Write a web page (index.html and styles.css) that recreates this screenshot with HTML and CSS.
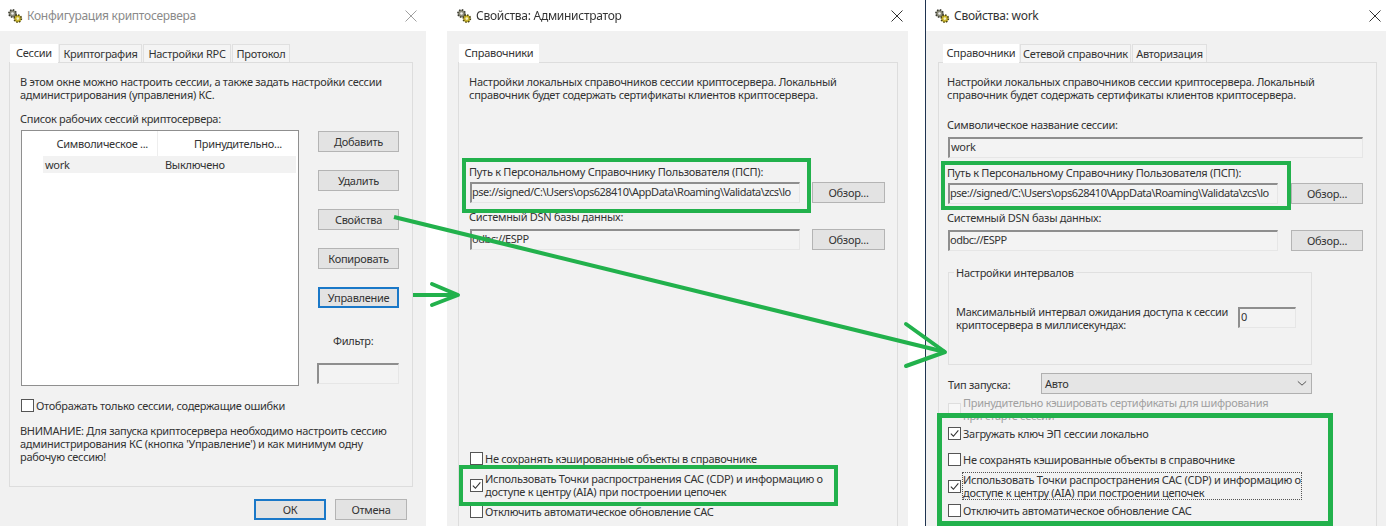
FILE: index.html
```html
<!DOCTYPE html>
<html lang="ru">
<head>
  <meta charset="UTF-8" />
  <title>Конфигурация криптосервера</title>
  <link rel="stylesheet" href="styles.css">
</head>
<body>
  <svg class="defs" width="0" height="0">
    <symbol id="gears" viewBox="0 0 16 16">
      <circle cx="5.5" cy="5.5" r="3.6" fill="#8c8c7a" stroke="#3a3a30" stroke-width="1.6" stroke-dasharray="1.5 1.3"/>
      <circle cx="5.5" cy="5.5" r="1.3" fill="#f0f0f0"/>
      <circle cx="10.8" cy="10.6" r="3.6" fill="#c8b42c" stroke="#4a4418" stroke-width="1.6" stroke-dasharray="1.5 1.3"/>
      <circle cx="10.8" cy="10.6" r="1.3" fill="#f4f0c8"/>
    </symbol>
    <symbol id="tick" viewBox="0 0 12 12">
      <path d="M2 6.2 L4.8 9 L10.2 2.6" fill="none" stroke="#333" stroke-width="1.2"/>
    </symbol>
    <symbol id="cross" viewBox="0 0 12 12">
      <path d="M0.5 0.5 L11.5 11.5 M11.5 0.5 L0.5 11.5" fill="none" stroke="currentColor" stroke-width="1"/>
    </symbol>
  </svg>

  <!-- Конфигурация -->
  <section class="window win-config">
    <header class="titlebar dim">
      <svg class="gear"><use href="#gears"/></svg>
      <span>Конфигурация криптосервера</span>
      <svg class="close light"><use href="#cross"/></svg>
    </header>
    <div class="client">
      <div class="tabs">
        <div class="tab active">Сессии</div>
        <div class="tab t-crypt">Криптография</div>
        <div class="tab t-rpc">Настройки RPC</div>
        <div class="tab t-proto">Протокол</div>
      </div>
      <div class="panel panel-config">
        <p class="txt">В этом окне можно настроить сессии, а также задать настройки сессии<br>администрирования (управления) КС.</p>
        <p class="txt list-title">Список рабочих сессий криптосервера:</p>
        <div class="sessions">
          <div class="listbox">
            <div class="list-head">
              <span class="col-name">Символическое ...</span>
              <span class="col-force">Принудительно...</span>
            </div>
            <div class="list-row">
              <span class="cell-name">work</span>
              <span>Выключено</span>
            </div>
          </div>
          <div class="side">
            <button class="btn">Добавить</button>
            <button class="btn">Удалить</button>
            <button class="btn">Свойства</button>
            <button class="btn">Копировать</button>
            <button class="btn default">Управление</button>
            <div class="filter-label">Фильтр:</div>
            <div class="input filter"></div>
          </div>
        </div>
        <div class="check only-errors"><span class="box"></span><span>Отображать только сессии, содержащие ошибки</span></div>
        <p class="txt warning">ВНИМАНИЕ: Для запуска криптосервера необходимо настроить сессию<br>администрирования КС (кнопка 'Управление') и как минимум одну<br>рабочую сессию!</p>
      </div>
      <div class="actions">
        <button class="btn wide default">ОК</button>
        <button class="btn wide">Отмена</button>
      </div>
    </div>
  </section>

  <!-- Свойства: Администратор -->
  <section class="window win-admin">
    <header class="titlebar">
      <svg class="gear"><use href="#gears"/></svg>
      <span>Свойства: Администратор</span>
      <svg class="close"><use href="#cross"/></svg>
    </header>
    <div class="client">
      <div class="tabs">
        <div class="tab active">Справочники</div>
      </div>
      <div class="panel panel-props">
        <p class="txt">Настройки локальных справочников сессии криптосервера. Локальный<br>справочник будет содержать сертификаты клиентов криптосервера.</p>
        <p class="txt pse-label">Путь к Персональному Справочнику Пользователя (ПСП):</p>
        <div class="field">
          <div class="input path">pse://signed/C:\Users\ops628410\AppData\Roaming\Validata\zcs\lo</div>
          <button class="btn browse">Обзор...</button>
        </div>
        <p class="txt dsn-label">Системный DSN базы данных:</p>
        <div class="field dsn-field">
          <div class="input path">odbc://ESPP</div>
          <button class="btn browse">Обзор...</button>
        </div>
        <div class="checks checks-admin">
          <div class="check"><span class="box"></span><span>Не сохранять кэшированные объекты в справочнике</span></div>
          <div class="check two-line"><span class="box"><svg><use href="#tick"/></svg></span><span>Использовать Точки распространения САС (CDP) и информацию о<br>доступе к центру (AIA) при построении цепочек</span></div>
          <div class="check"><span class="box"></span><span>Отключить автоматическое обновление САС</span></div>
        </div>
      </div>
    </div>
  </section>

  <!-- Свойства: work -->
  <div class="top-sliver"></div>
  <section class="window win-work">
    <header class="titlebar">
      <svg class="gear"><use href="#gears"/></svg>
      <span>Свойства: work</span>
      <svg class="close"><use href="#cross"/></svg>
    </header>
    <div class="client">
      <div class="tabs">
        <div class="tab active">Справочники</div>
        <div class="tab t-net">Сетевой справочник</div>
        <div class="tab t-auth">Авторизация</div>
      </div>
      <div class="panel panel-props">
        <p class="txt">Настройки локальных справочников сессии криптосервера. Локальный<br>справочник будет содержать сертификаты клиентов криптосервера.</p>
        <p class="txt name-label">Символическое название сессии:</p>
        <div class="input name-input">work</div>
        <p class="txt pse-label-work">Путь к Персональному Справочнику Пользователя (ПСП):</p>
        <div class="field">
          <div class="input path">pse://signed/C:\Users\ops628410\AppData\Roaming\Validata\zcs\lo</div>
          <button class="btn browse">Обзор...</button>
        </div>
        <p class="txt dsn-label">Системный DSN базы данных:</p>
        <div class="field dsn-field">
          <div class="input path">odbc://ESPP</div>
          <button class="btn browse">Обзор...</button>
        </div>
        <fieldset class="group">
          <legend>Настройки интервалов</legend>
          <div class="group-row">
            <p class="txt">Максимальный интервал ожидания доступа к сессии<br>криптосервера в миллисекундах:</p>
            <div class="input timeout">0</div>
          </div>
        </fieldset>
        <div class="start-row">
          <span class="start-label">Тип запуска:</span>
          <div class="select"><span>Авто</span>
            <svg width="10" height="7" viewBox="0 0 12 8"><path d="M1 1.5 L6 6 L11 1.5" fill="none" stroke="#555" stroke-width="1.2"/></svg>
          </div>
        </div>
        <div class="checks checks-work">
          <div class="check two-line disabled"><span class="box"></span><span>Принудительно кэшировать сертификаты для шифрования<br>при старте сессии</span></div>
          <div class="check load-key"><span class="box"><svg><use href="#tick"/></svg></span><span>Загружать ключ ЭП сессии локально</span></div>
          <div class="check no-cache"><span class="box"></span><span>Не сохранять кэшированные объекты в справочнике</span></div>
          <div class="check two-line use-cdp"><span class="box"><svg><use href="#tick"/></svg></span><span class="focus">Использовать Точки распространения САС (CDP) и информацию о<br>доступе к центру (AIA) при построении цепочек</span></div>
          <div class="check"><span class="box"></span><span>Отключить автоматическое обновление САС</span></div>
        </div>
      </div>
    </div>
  </section>

  <!-- green annotations drawn over the screenshots -->
  <svg class="marks" width="1391" height="526" viewBox="0 0 1391 526">
    <g fill="none" stroke="#22b14c" stroke-width="4">
      <rect x="464" y="160" width="345" height="51"/>
      <rect x="461" y="467" width="375" height="37"/>
      <rect x="943" y="163" width="346" height="45"/>
      <rect x="939.5" y="415.5" width="391" height="108" stroke-width="5"/>
      <path d="M394 217 L945 352"/>
      <path d="M906 324 L945 352 L906 366" stroke-linecap="round" stroke-linejoin="round"/>
      <path d="M413 295 H458"/>
      <path d="M432 284 L458 295 L432 305" stroke-linecap="round" stroke-linejoin="round"/>
    </g>
  </svg>
</body>
</html>
```

FILE: styles.css
```css
* {
  box-sizing: border-box;
}
html, body {
  margin: 0;
  height: 526px;
  overflow: hidden;
}
body {
  position: relative;
  width: 1391px;
  background: #fff;
  font-family: "Noto Sans", Arial, sans-serif;
  font-size: 11px;
  letter-spacing: -0.28px;
  line-height: 13px;
  color: #333;
  filter: blur(0.35px);
}
.defs {
  position: absolute;
}
.marks {
  position: absolute;
  left: 0;
  top: 0;
}

/* windows sit on a free canvas */
.window {
  position: absolute;
  top: 0;
  height: 526px;
  overflow: hidden;
  display: flex;
  flex-direction: column;
}
.win-config {
  left: 0;
  width: 426px;
}
.win-admin {
  left: 447px;
  width: 461px;
}
.win-work {
  left: 925px;
  width: 461px;
  border-left: 1px solid #1f3350;
}
.top-sliver {
  position: absolute;
  left: 1096px;
  top: 5px;
  width: 52px;
  height: 1px;
  background: #999;
}

.titlebar {
  height: 31px;
  flex: none;
  display: flex;
  align-items: center;
  padding: 0 5px 0 9px;
  background: #fff;
  font-size: 12px;
  color: #333;
}
.win-work .titlebar {
  padding-left: 8px;
}
.titlebar.dim {
  padding: 0 9px 0 7px;
  color: #8a8a8a;
}
.gear {
  width: 16px;
  height: 16px;
  margin-right: 4px;
}
.close {
  width: 12px;
  height: 12px;
  margin-left: auto;
  color: #333;
}
.close.light {
  color: #a0a0a0;
}
.client {
  flex: 1;
  background: #f1f1f1;
  padding: 13px 10px 0 11px;
}
.win-config .client {
  padding: 13px 13px 0 9px;
}

/* tabs */
.tabs {
  display: flex;
  height: 18px;
  padding-left: 1px;
}
.win-work .tabs {
  padding-left: 6px;
}
.tab {
  height: 18px;
  padding: 2px 0 0;
  width: 83px;
  text-align: center;
  white-space: nowrap;
  background: #f4f4f4;
  border: 1px solid #e0e0e0;
  border-bottom: 0;
  margin-left: 1px;
}
.tab.active {
  width: 76px;
  height: 19px;
  background: #fff;
  border: 0;
  margin-left: 0;
  position: relative;
  z-index: 1;
}
.win-config .tab.active {
  width: 48px;
}
.win-admin .tab.active {
  width: 80px;
}
.t-rpc {
  width: 88px;
}
.t-proto {
  width: 58px;
}
.t-net {
  width: 111px;
}
.t-auth {
  width: 75px;
}

.panel {
  border: 1px solid #dddddd;
  background: #f2f2f2;
}
.panel-config {
  height: 425px;
  padding: 12px 10px 0;
}
.panel-props {
  height: 480px;
  width: 440px;
  padding: 12px 10px 0;
}
.win-work .panel-props {
  width: 439px;
  margin-left: 1px;
  padding-left: 8px;
}
.txt {
  margin: 0;
}

/* session list */
.list-title {
  margin-top: 11px;
}
.sessions {
  display: flex;
  margin: 5px 0 0 1px;
}
.listbox {
  width: 278px;
  height: 256px;
  background: #fff;
  border: 1px solid #8f8f8f;
  padding: 0 2px;
}
.list-head {
  height: 25px;
  display: flex;
  align-items: center;
}
.col-name {
  width: 134px;
  padding-right: 9px;
  text-align: right;
  border-right: 1px solid #eee;
  line-height: 25px;
}
.col-force {
  flex: 1;
  text-align: right;
  padding-right: 14px;
}
.list-row {
  height: 17px;
  margin-left: 19px;
  background: #f2f2f2;
  display: flex;
  align-items: center;
}
.cell-name {
  width: 122px;
  padding-left: 2px;
}
.side {
  width: 81px;
  margin-left: 19px;
  margin-top: 1px;
  display: flex;
  flex-direction: column;
  gap: 18px;
}
.btn {
  display: block;
  width: 81px;
  height: 21px;
  padding: 0;
  font: inherit;
  letter-spacing: inherit;
  color: #333;
  background: #e3e3e3;
  border: 1px solid #b4b4b4;
}
.btn.default {
  border: 2px solid #1a78c8;
}
.filter-label {
  margin: 8px 0 0 15px;
  color: #333;
}
.input {
  height: 21px;
  background: #f3f3f3;
  border: 1px solid #e6e6e6;
  border-top: 2px solid #8e8e8e;
  border-left: 2px solid #8e8e8e;
  padding: 1px 0 0 1px;
  white-space: nowrap;
  overflow: hidden;
}
.filter {
  margin-top: -2px;
  margin-left: -1px;
}

.check {
  display: flex;
  align-items: center;
  min-height: 13px;
}
.box {
  flex: none;
  width: 13px;
  height: 13px;
  margin-right: 2px;
  background: #fff;
  border: 1px solid #555;
  display: flex;
}
.box svg {
  width: 11px;
  height: 11px;
}
.only-errors {
  margin: 13px 0 0 1px;
}
.warning {
  margin-top: 12px;
}
.actions {
  display: flex;
  justify-content: flex-end;
  gap: 9px;
  margin-top: 12px;
  padding-right: 6px;
}
.btn.wide {
  width: 72px;
}

/* property dialogs */
.pse-label {
  margin-top: 64px;
}
.field {
  display: flex;
  align-items: center;
  margin: 4px 0 0 1px;
}
.path {
  width: 330px;
  padding-left: 0;
  letter-spacing: -0.5px;
}
.browse {
  width: 73px;
  margin-left: 12px;
}
.dsn-label {
  margin-top: 7px;
}
.dsn-field {
  margin-top: 6px;
}
.checks {
  display: flex;
  flex-direction: column;
  margin-left: 1px;
}
.checks-admin {
  margin-top: 202px;
  gap: 7px;
}
.two-line .box {
  align-self: center;
}

.name-label {
  margin-top: 17px;
}
.name-input {
  width: 415px;
  margin: 6px 0 0 1px;
}
.pse-label-work {
  margin-top: 8px;
}
.win-work .browse {
  width: 72px;
  margin-left: 13px;
}
.group {
  width: 364px;
  height: 99px;
  margin: 15px 0 0 1px;
  padding: 0;
  border: 1px solid #e0e0e0;
}
.group legend {
  margin-left: 5px;
  padding: 0 2px;
}
.group-row {
  display: flex;
  align-items: flex-start;
  padding: 26px 0 0 7px;
}
.timeout {
  width: 58px;
  margin: 2px 15px 0 auto;
}
.start-row {
  display: flex;
  align-items: center;
  margin: 8px 0 0 1px;
  height: 21px;
}
.start-label {
  width: 93px;
  padding-top: 1px;
}
.select {
  width: 271px;
  height: 21px;
  display: flex;
  align-items: center;
  justify-content: space-between;
  padding: 0 4px 0 3px;
  background: #e5e5e5;
  border: 1px solid #b0b0b0;
}
.checks-work {
  margin-top: 2px;
}
.disabled {
  color: #a0a0a0;
}
.disabled .box {
  background: #f7f7f7;
  border-color: #dedede;
}
.load-key {
  margin-top: 5px;
}
.no-cache {
  margin-top: 13px;
}
.use-cdp {
  margin-top: 7px;
}
.use-cdp + .check {
  margin-top: 5px;
}
.focus {
  outline: 1px dotted #555;
}
```
